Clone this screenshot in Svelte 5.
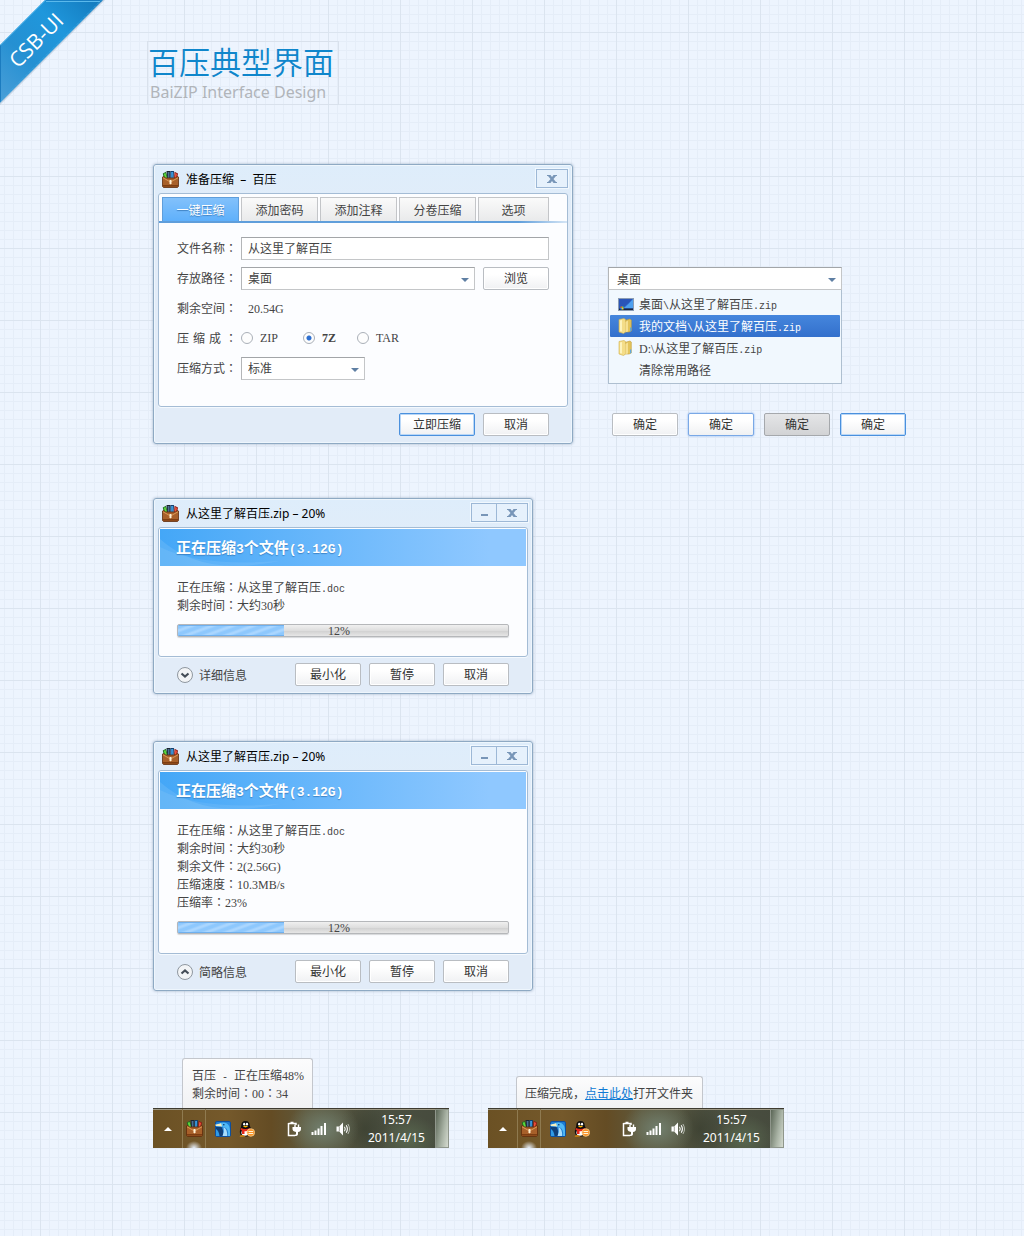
<script>
  const tabs = ['一键压缩', '添加密码', '添加注释', '分卷压缩', '选项'];
  const formats = ['ZIP', '7Z', 'TAR'];
  const paths = [
    { icon: 'desktop', text: '桌面\\从这里了解百压.zip' },
    { icon: 'folder', text: '我的文档\\从这里了解百压.zip' },
    { icon: 'folder', text: 'D:\\从这里了解百压.zip' },
    { icon: '', text: '清除常用路径' }
  ];
  const jobs = [
    {
      open: false,
      toggle: '详细信息',
      fill: 32,
      lines: ['正在压缩：从这里了解百压.doc', '剩余时间：大约30秒']
    },
    {
      open: true,
      toggle: '简略信息',
      fill: 32,
      lines: [
        '正在压缩：从这里了解百压.doc',
        '剩余时间：大约30秒',
        '剩余文件：2(2.56G)',
        '压缩速度：10.3MB/s',
        '压缩率：23%'
      ]
    }
  ];
  let activeTab = $state(0);
  let format = $state('7Z');
  let activePath = $state(1);

  function kindOf(t) {
    if (t === '：') return 'colon';
    if (/^[0-9A-Z(]/.test(t)) return 'num';
    return /^[\x20-\x7e]/.test(t) ? 'latin' : 'han';
  }

  // Splits a string into number runs, other Latin runs, wide colons and CJK runs.
  function runs(text) {
    return text
      .split(/(：|[\x20-\x7e]+)/)
      .filter(Boolean)
      .map((t) => ({ t, kind: kindOf(t) }));
  }
</script>

{#snippet mixed(text)}{#each runs(text) as r}<span class={r.kind}>{r.t}</span>{/each}{/snippet}

{#snippet wallet()}
  <svg class="wallet" width="17" height="17" viewBox="0 0 17 17" aria-hidden="true">
    <path d="M.8 2.500 4 .8 6 8H2z" fill="#1f6b22" />
    <path d="M1.800 2.800 3.500 1.900 5 7H3z" fill="#5fd83c" />
    <path d="M4.500 0h4v9h-3z" fill="#1b2530" />
    <path d="M5.600 1H7.500v8H6.200z" fill="#4b6f94" />
    <path d="M8.500 0H12l-.5 9h-3z" fill="#143f6e" />
    <path d="M9.200 1H11l-.4 8H9.200z" fill="#3fa0e4" />
    <path d="m12.500.8 3.500 1.700L15 8h-3z" fill="#8e1c17" />
    <path d="m13.200 1.900 1.800 1L14 7.500h-1.200z" fill="#f0523a" />
    <path d="M.5 6 2 5.500 3.500 7h10L15 5.500l1.500.5v9.500l-1 1h-14l-1-1z" fill="#a8602a" stroke="#5e2c0c" stroke-width=".8" />
    <path d="M1 6.800 8.500 11 16 6.800" fill="none" stroke="#dd9a55" />
    <path d="M1 14.800h15" stroke="#7d3d12" stroke-width="1.600" />
    <path d="M7.500 9h2v3.500l-1 1-1-1z" fill="#fff2d6" />
  </svg>
{/snippet}

{#snippet cross()}
  <svg width="10" height="8" viewBox="0 0 10 8" aria-hidden="true">
    <path d="M0 0h3.500L5 2l1.500-2H10v1H9L6.500 4 9 7h1v1H6.500L5 6 3.500 8H0V7h1l2.500-3L1 1H0z" fill="#7896b8" />
  </svg>
{/snippet}

{#snippet taskbar()}
  <div class="taskbar">
    <button class="tb arrow" aria-label="显示隐藏的图标">
      <svg width="8" height="4" viewBox="0 0 8 4"><path d="m0 4 4-4 4 4z" fill="#fff" /></svg>
    </button>
    <button class="tb slot" aria-label="百压">{@render wallet()}</button>
    <svg class="bird" width="16" height="16" viewBox="0 0 16 16" aria-hidden="true">
      <rect x=".5" y=".5" width="15" height="15" rx="1.500" fill="#1d7cd2" stroke="#0d4f9e" />
      <path d="M1 6h5.500L8 9.500V15H1z" fill="#0f3f78" />
      <path d="M1 8q3 2 3.500 7H1z" fill="#2f9be6" />
      <path d="M5 2.500Q8 .8 11.500 2.200 15 4 15 10v5h-2q1-7-4-9L6 5.500z" fill="#4fb8f5" />
      <path d="M8.500 6q4 2 3.700 9H7.500Q9.500 11 8.500 6z" fill="#a8ddfb" />
      <path d="M0 3.800 6 2.300 7 5.500 1 5z" fill="#f6eebc" />
      <circle cx="8.800" cy="3.700" r=".8" fill="#0b2f66" />
    </svg>
    <svg class="qq" width="16" height="16" viewBox="0 0 16 16" aria-hidden="true">
      <path d="M6.500 0c2.900 0 4.200 2 4.200 4.200 0 1.500 2.300 3.600 2.300 6.300 0 3.500-3 5-6.500 5S1 14 .8 11C.8 8 2.300 6.500 2.300 4.200 2.300 2 3.600 0 6.500 0z" fill="#0e0e0e" />
      <ellipse cx="6" cy="11.800" rx="3.600" ry="3" fill="#fff" />
      <ellipse cx="5.200" cy="3.200" rx="1.100" ry="1.400" fill="#fff" />
      <ellipse cx="8" cy="3.200" rx="1.100" ry="1.400" fill="#fff" />
      <path d="M3.800 5.300q2.700-1 5.400 0-2.700 2.200-5.400 0z" fill="#ffb400" />
      <path d="M2 7q4.500 1.800 9 0l.5 2q-3 1.500-6 1.200V13H3V9.500L1.500 9z" fill="#e52a1c" />
      <path d="M.5 15.500q2.500-2.500 6 0z" fill="#ff9d00" />
      <circle cx="11.800" cy="11.500" r="3.800" fill="#f7932a" stroke="#fcd08c" stroke-width=".8" />
      <path d="M9.500 10.500h4.600M9.500 12.500h4.600" stroke="#fff3d8" stroke-width="1.200" />
    </svg>
    <svg class="plug" width="14" height="16" viewBox="0 0 14 16" aria-hidden="true">
      <path d="M3.500 1.500h3M1.500 2.500H9V4M1.500 2v12.500H8" fill="none" stroke="#fff" stroke-width="1.500" />
      <path d="M8 3.500v3M11.500 3.500v3" stroke="#fff" stroke-width="1.400" />
      <path d="M5.500 6H14v2q0 2.500-3 3v2q0 2-3 2v-1.200q1 0 1-1V11Q5.500 10.300 5.500 8z" fill="#fff" />
    </svg>
    <svg class="signal" width="16" height="12" viewBox="0 0 16 12" aria-hidden="true">
      <path d="M.5 9h2v3h-2zM3.500 7.500h2V12h-2zM6.500 5.500h2V12h-2zM9.500 3h2v9h-2zM13 0h2v12h-2z" fill="#fff" />
    </svg>
    <svg class="speaker" width="16" height="14" viewBox="0 0 16 14" aria-hidden="true">
      <path d="M.5 4.500h2.700L7 .6v12.800L3.200 9.500H.5z" fill="#fff" />
      <path d="M3.300 4.500v5" stroke="#77786d" stroke-width=".7" />
      <path d="M8.500 4.800q1.500 2.200 0 4.400M10.200 3.300q2.400 3.700 0 7.400" fill="none" stroke="#fff" stroke-width="1.100" />
      <path d="M11.900 2q3.200 5 0 10" fill="none" stroke="#b9bdb3" />
    </svg>
    <div class="clock"><span>15:57</span><span>2011/4/15</span></div>
    <button class="peek" aria-label="显示桌面"></button>
  </div>
{/snippet}

<svg class="ribbon" width="106" height="106" viewBox="0 0 106 106">
  <defs>
    <linearGradient id="rib" x1="0" y1="1" x2="1" y2="0">
      <stop offset="0" stop-color="#4a9fd8" />
      <stop offset=".35" stop-color="#2590d2" />
      <stop offset=".65" stop-color="#1f97dc" />
      <stop offset="1" stop-color="#1278bb" />
    </linearGradient>
  </defs>
  <path d="M0 105 105 0H60L0 60z" fill="#7f94ab" opacity=".3" />
  <path d="M45 0h58L0 103V45z" fill="url(#rib)" />
  <path d="M45.500.8H102M.5 45v57" stroke="#1b7cc0" />
  <path d="M46 1.500h54M0 45.500 45.500 0" stroke="#5ab9ec" fill="none" />
  <path d="M0 101.500 101.500 0" stroke="#4aaee6" stroke-dasharray="1 1" />
  <text class="ribbon-text" transform="translate(18 69) rotate(-45)">CSB-UI</text>
</svg>

<main>
  <header>
    <h1>百压典型界面</h1>
    <p>BaiZIP Interface Design</p>
  </header>

  <div class="top">
    <section class="window wide">
      <div class="titlebar">
        {@render wallet()}
        <h2>准备压缩&nbsp; – &nbsp;百压</h2>
        <div class="caption"><button class="close" aria-label="关闭">{@render cross()}</button></div>
      </div>
      <div class="pane">
        <div class="tabs" role="tablist">
          {#each tabs as tab, i}
            <button role="tab" class="tab" class:active={activeTab === i} aria-selected={activeTab === i} onclick={() => (activeTab = i)}>{tab}</button>
          {/each}
        </div>
        <form class="form" onsubmit={(e) => e.preventDefault()}>
          <div class="row">
            <label class="name" for="fname">{@render mixed('文件名称：')}</label>
            <input class="field grow" id="fname" type="text" value="从这里了解百压" />
          </div>
          <div class="row">
            <label class="name" for="fpath">{@render mixed('存放路径：')}</label>
            <div class="pick grow"><select class="field" id="fpath"><option>桌面</option></select></div>
            <button class="btn browse" type="button">浏览</button>
          </div>
          <div class="row">
            <span class="name">{@render mixed('剩余空间：')}</span>
            <span class="value">{@render mixed('20.54G')}</span>
          </div>
          <div class="row">
            <span class="name justify" id="fmt"><span>压</span><span>缩</span><span>成</span><span class="colon">：</span></span>
            <div class="radios" role="radiogroup" aria-labelledby="fmt">
              {#each formats as f}
                <label class:bold={format === f}><input type="radio" name="format" value={f} bind:group={format} /><span class="num">{f}</span></label>
              {/each}
            </div>
          </div>
          <div class="row">
            <label class="name" for="fmode">{@render mixed('压缩方式：')}</label>
            <div class="pick mode"><select class="field" id="fmode"><option>标准</option></select></div>
          </div>
        </form>
      </div>
      <div class="footer">
        <button class="btn primary go">立即压缩</button>
        <button class="btn">取消</button>
      </div>
    </section>

    <aside>
      <div class="pick combo"><select class="field" aria-label="存放路径"><option>桌面</option></select></div>
      <ul class="menu">
        {#each paths as p, i}
          <li>
            <button class:selected={activePath === i} onclick={() => (activePath = i)}>
              <span class="ico">
                {#if p.icon === 'desktop'}
                  <svg width="16" height="13" viewBox="0 0 16 13" aria-hidden="true">
                    <rect x=".5" y=".5" width="15" height="12" fill="#2f6fd0" stroke="#8a9cb4" />
                    <path d="M1 1h14L5 10H1z" fill="#2a55b8" />
                    <path d="M15 1v9H6Q10 7 15 1z" fill="#4ea0ef" />
                    <path d="M1 10.500h14V12H1z" fill="#1c2740" />
                    <path d="M2.500 8.500H4V10H2.500z" fill="#e8682c" />
                    <path d="M4 8.500h1.500V10H4z" fill="#8bcf3a" />
                    <path d="M2.500 10H4v1.500H2.500z" fill="#38a5ee" />
                    <path d="M4 10h1.500v1.500H4z" fill="#f8d030" />
                  </svg>
                {:else if p.icon === 'folder'}
                  <svg width="14" height="16" viewBox="0 0 14 16" aria-hidden="true">
                    <path d="M7 2.500 12 1l1.300 1v11l-2.300 1H6z" fill="#e3c45c" stroke="#c29c39" stroke-width=".6" />
                    <path d="M1 1.500 6 .5l1.500 1V14L5.500 15.500 1 14z" fill="#f4dd88" stroke="#d3b14c" stroke-width=".6" />
                    <path d="M2 2.500 4 2v11.500l-2-.5z" fill="#fdf3bd" />
                    <path d="M7.500 4 10 2.500v11l-2.500.8z" fill="#f5e093" />
                    <path d="M12 9.500h1.300v3.500L12 13.500z" fill="#5fa9e0" />
                  </svg>
                {/if}
              </span>
              <span>{@render mixed(p.text)}</span>
            </button>
          </li>
        {/each}
      </ul>
      <div class="states">
        <button class="btn">确定</button>
        <button class="btn hover">确定</button>
        <button class="btn pressed">确定</button>
        <button class="btn primary">确定</button>
      </div>
    </aside>
  </div>

  {#each jobs as job}
    <section class="window job">
      <div class="titlebar">
        {@render wallet()}
        <h2>从这里了解百压.zip – 20%</h2>
        <div class="caption">
          <button class="min" aria-label="最小化"><i></i></button>
          <button class="close" aria-label="关闭">{@render cross()}</button>
        </div>
      </div>
      <div class="pane">
        <div class="banner">
          <svg viewBox="0 0 366 37" preserveAspectRatio="none" aria-hidden="true">
            <path d="M0 10q30 27 75 27H0z" fill="#fff" opacity=".1" />
            <path d="M0 18q40 20 120 14-40 8-75 5H0z" fill="#fff" opacity=".08" />
          </svg>
          <strong>{@render mixed('正在压缩3个文件(3.12G)')}</strong>
        </div>
        <div class="details">
          {#each job.lines as line}<p>{@render mixed(line)}</p>{/each}
          <div class="bar" role="progressbar" aria-valuenow="12" aria-valuemin="0" aria-valuemax="100" aria-label="压缩进度">
            <div class="fill" style:width="{job.fill}%"></div>
            <span class="num">12%</span>
          </div>
        </div>
      </div>
      <div class="footer">
        <button class="toggle" aria-expanded={job.open}>
          <svg width="16" height="16" viewBox="0 0 16 16" aria-hidden="true">
            <circle cx="8" cy="8" r="7.500" fill="#f2f4f6" stroke="#8f979f" />
            <path d={job.open ? 'm4.500 9.500 3.500-3 3.500 3' : 'm4.500 6.500 3.500 3 3.500-3'} fill="none" stroke="#444d57" stroke-width="2.200" />
          </svg>
          <span>{job.toggle}</span>
        </button>
        <button class="btn">最小化</button>
        <button class="btn">暂停</button>
        <button class="btn">取消</button>
      </div>
    </section>
  {/each}

  <div class="trays">
    <div class="tray">
      <div class="tip"><p>{@render mixed('百压 - 正在压缩48%')}</p><p>{@render mixed('剩余时间：00：34')}</p></div>
      {@render taskbar()}
    </div>
    <div class="tray">
      <div class="tip single"><p>压缩完成，<a href="#folder">点击此处</a>打开文件夹</p></div>
      {@render taskbar()}
    </div>
  </div>
</main>

<style>
  :global(body) {
    background-color: #edf4fe;
    background-image:
      linear-gradient(90deg, #dbe4ef 1px, transparent 1px),
      linear-gradient(#dbe4ef 1px, transparent 1px),
      linear-gradient(90deg, #e5edf8 1px, transparent 1px),
      linear-gradient(#e5edf8 1px, transparent 1px);
    background-size: 72px 72px, 72px 72px, 9px 9px, 9px 9px;
    background-position: 40px 32px, 40px 32px, 4px 5px, 4px 5px;
  }
  * { box-sizing: border-box; }
  main {
    padding: 41px 24px 88px 153px;
    font: 12px/18px 'Noto Sans CJK SC', sans-serif;
    color: #444;
  }
  h1, h2, p, ul { margin: 0; padding: 0; font-weight: normal; }
  button, input, select { font: inherit; color: inherit; margin: 0; }
  svg { display: block; flex: none; }
  .latin { font-family: 'Liberation Mono', monospace; font-size: 10px; line-height: 1; white-space: pre; }
  .num { font-family: 'Liberation Serif', serif; line-height: 1; }
  .colon { font-family: 'Noto Sans CJK TC', sans-serif; }

  .ribbon { position: absolute; left: 0; top: 0; }
  .ribbon-text {
    font: 21px 'Open Sans', sans-serif;
    fill: #fff;
  }

  header {
    width: 192px;
    height: 64px;
    margin-left: -6px;
    border: 1px solid #d9e1ec;
  }
  h1 { font-size: 31px; line-height: 38px; font-weight: 350; color: #0f86cb; white-space: nowrap; }
  header p { padding-left: 2px; font: 16px/24px 'Noto Sans', sans-serif; color: #b1b5ba; white-space: nowrap; }

  .top { display: flex; align-items: flex-start; gap: 35px; margin-top: 59px; }
  .window {
    max-width: 100%;
    padding: 0 4px;
    border: 1px solid #8ea9c3;
    border-radius: 3px;
    background: linear-gradient(#deedfb, #e2ecf8 60px);
    box-shadow: inset 0 0 0 1px #eef6fd, 0 0 3px #9fb0c4;
  }
  .wide { width: 420px; flex: none; }
  .job { width: 380px; margin-top: 54px; }
  .job + .job { margin-top: 47px; }
  .titlebar { display: flex; align-items: center; height: 28px; padding: 0 0 0 4px; }
  h2 { flex: 1; padding: 1px 0 0 7px; font: 12px/18px 'Noto Sans', 'Noto Sans CJK SC', sans-serif; color: #000; }
  .caption { display: flex; align-self: flex-start; margin-top: 4px; border: 1px solid #9db8d6; box-shadow: 0 0 0 1px #f1f8fe; }
  .caption button {
    display: flex; align-items: center; justify-content: center;
    width: 30px; height: 17px; padding: 0; border: 0; background: #e6f1fc;
  }
  .caption .min { width: 25px; border-right: 1px solid #9db8d6; }
  .min i { width: 7px; height: 2px; margin-top: 5px; background: #7896b8; }

  .pane { border: 1px solid #a4bcd5; border-radius: 3px; background: #fcfdff; box-shadow: 0 1px 0 #f4f9fe; }
  .tabs {
    display: flex; gap: 2px; height: 29px; padding: 3px 0 2px 3px;
    background: linear-gradient(90deg, #5f9edb 88%, #d5e5f5) bottom / 100% 2px no-repeat;
  }
  .tab {
    flex: 0 0 77px; padding: 0; border: 1px solid #c3c5c8; border-bottom: 0;
    background: linear-gradient(#fafafa, #e9eaeb);
  }
  .tab:last-child { flex-basis: 71px; }
  .tab.active { color: #fff; border-color: #5f9edb; background: linear-gradient(#82c1fb, #5fb0fb); text-shadow: 0 1px 1px #3d7fc0; }
  .form { padding: 10px 18px 23px; }
  .row { display: flex; align-items: center; height: 30px; }
  .name { flex: none; width: 64px; white-space: nowrap; }
  .justify { display: flex; justify-content: space-between; width: 60px; margin-right: 4px; }
  .grow { flex: 1; min-width: 0; }
  .field {
    display: block; width: 100%; height: 23px; padding: 0 6px 1px;
    border: 1px solid #c4c6c8; border-top-color: #a2a5a8; border-left-color: #b4b6b8; border-radius: 0;
    background: #fff; appearance: none; outline: none;
  }
  .pick { position: relative; }
  .pick::after {
    content: ''; position: absolute; right: 6px; top: 11px;
    border: 4px solid transparent; border-top-color: #5f7fa3; border-bottom: 0; pointer-events: none;
  }
  .mode { width: 124px; }
  .btn {
    width: 66px; height: 23px; flex: none; padding: 0 0 1px; color: #333;
    border: 1px solid #b9bdc2; border-radius: 2px;
    background: linear-gradient(#fff 30%, #f0f1f3);
    box-shadow: inset 0 0 0 1px #fff;
  }
  .browse { margin-left: 8px; }
  .btn.primary { border-color: #4a90dd; box-shadow: inset 0 0 0 1px #b9d7f7; }
  .btn.hover { border-color: #7aa8e6; box-shadow: 0 0 2px #6ea2ea; }
  .btn.pressed { border-color: #a5a8ac; background: linear-gradient(#e4e5e7, #d2d3d5); box-shadow: none; }
  .btn.go { width: 76px; }
  .value { padding-left: 7px; }
  .radios { display: grid; grid-template-columns: 62px 54px auto; }
  .radios label { display: flex; align-items: center; gap: 7px; }
  .radios input {
    appearance: none; width: 12px; height: 12px; border: 1px solid #aab0b8; border-radius: 50%; background: #fdfdfd;
  }
  .radios input:checked { background: radial-gradient(#2d6fd0 2px, #fdfdfd 3px); }
  .bold { font-weight: bold; }
  .footer { display: flex; align-items: flex-start; justify-content: flex-end; gap: 8px; height: 36px; padding: 6px 19px 0; }

  aside { padding-top: 103px; }
  .combo { width: 234px; }
  .combo .field { padding: 0 8px; }
  .menu { width: 234px; padding: 3px 1px 2px; list-style: none; border: 1px solid #aebfd0; border-top: 0; background: #f1f8fe; }
  .menu button {
    display: flex; align-items: center; width: 100%; height: 22px; padding: 0 0 0 8px;
    border: 0; border-radius: 1px; background: none; text-align: left; white-space: nowrap;
  }
  .menu .selected { color: #fff; background: linear-gradient(#4586dd, #3370cc); }
  .ico { width: 21px; flex: none; }
  .states { display: flex; gap: 10px; margin: 29px 0 0 4px; }

  .job .pane { padding: 1px; }
  .banner { position: relative; height: 37px; padding-left: 16px; color: #fff; background: linear-gradient(90deg, #44a7f7, #8fc8ff 90%); text-shadow: 0 1px 1px #3c84c8; }
  .banner svg { position: absolute; inset: 0; width: 100%; height: 100%; }
  .banner strong { position: relative; display: block; font-size: 15px; line-height: 36px; }
  .banner .num { font-family: 'Liberation Mono', monospace; font-size: 13px; }
  .details { padding: 12px 17px 18px; }
  .bar {
    position: relative; height: 13px; margin-top: 10px; overflow: hidden; text-align: center;
    border: 1px solid #b5b7ba; border-radius: 2px; background: linear-gradient(#f0f0f0, #dedede 50%, #cfcfcf 51%, #e6e6e6);
    box-shadow: 0 1px 1px #d5d7da;
  }
  .fill {
    position: absolute; inset: 0 auto 0 0; border-top: 1px solid #6fb0ee; border-bottom: 1px solid #6fb0ee;
    background: repeating-linear-gradient(160deg, #8ec8fd 0 2px, #aad6ff 4px 5px, #8ec8fd 7px);
  }
  .bar .num { position: absolute; inset: 0; line-height: 12px; margin-right: 8px; }
  .toggle { display: flex; align-items: center; gap: 6px; height: 23px; margin-right: auto; padding: 0; border: 0; background: none; }

  .trays { display: flex; align-items: flex-end; gap: 39px; margin-top: 67px; }
  .tip {
    width: 131px; margin-left: 29px; padding: 7px 8px 6px 9px; border: 1px solid #c3c6cc; border-bottom: 0; border-radius: 3px 3px 0 0;
    background: linear-gradient(#fcfcfd, #f1f2f4); white-space: nowrap;
  }
  .tip.single { width: 187px; margin-left: 28px; padding-left: 8px; }
  .tip a { color: #0f7ad4; }
  .taskbar {
    display: flex; align-items: center; width: 296px; height: 40px; color: #fff;
    border-top: 1px solid #3e3b30; box-shadow: inset 0 1px 0 #a09a86;
    background:
      radial-gradient(ellipse 36px 30px at 170px 20px, #72806f, transparent),
      radial-gradient(ellipse 26px 30px at 212px 20px, #30362980, transparent),
      radial-gradient(ellipse 30px 24px at 256px 30px, #58674f, transparent),
      linear-gradient(90deg, #6b5124, #75592b 25%, #644c24 40%, #5e583c 52%, #4c5040 75%, #454a3d);
  }
  .tb { display: flex; align-items: center; justify-content: center; height: 39px; padding: 0; border: 0; background: none; }
  .arrow { width: 29px; }
  .slot {
    width: 24px; border: solid #8f7a50; border-width: 0 1px;
    background: radial-gradient(ellipse 8px 7px at 50% 100%, #e9f1fb, transparent);
  }
  .bird { margin-left: 9px; }
  .qq { margin-left: 8px; }
  .plug { margin-left: 32px; }
  .signal { margin-left: 10px; }
  .speaker { margin-left: 9px; }
  .clock { display: grid; flex: 1; padding-left: 6px; text-align: center; font: 12px/18px 'Noto Sans', sans-serif; }
  .peek { width: 14px; height: 39px; padding: 0; border: 1px solid #8f968b; background: linear-gradient(100deg, #5b6656, #a9b3a5 60%, #d5dbd0); }
</style>
